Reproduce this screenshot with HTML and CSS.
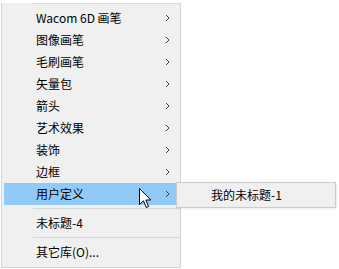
FILE: index.html
```html
<!DOCTYPE html>
<html>
<head>
	<meta charset="utf-8" />
	<title>Menu</title>
	<link rel="stylesheet" href="styles.css">
</head>
<body>
	<div class="menu">
		<div class="sep"></div>
		<div class="item">Wacom 6D 画笔<svg class="arrow" width="5" height="8" viewBox="0 0 5 8"><polyline points="1,1 4,4 1,7" /></svg></div>
		<div class="item">图像画笔<svg class="arrow" width="5" height="8" viewBox="0 0 5 8"><polyline points="1,1 4,4 1,7" /></svg></div>
		<div class="item">毛刷画笔<svg class="arrow" width="5" height="8" viewBox="0 0 5 8"><polyline points="1,1 4,4 1,7" /></svg></div>
		<div class="item">矢量包<svg class="arrow" width="5" height="8" viewBox="0 0 5 8"><polyline points="1,1 4,4 1,7" /></svg></div>
		<div class="item">箭头<svg class="arrow" width="5" height="8" viewBox="0 0 5 8"><polyline points="1,1 4,4 1,7" /></svg></div>
		<div class="item">艺术效果<svg class="arrow" width="5" height="8" viewBox="0 0 5 8"><polyline points="1,1 4,4 1,7" /></svg></div>
		<div class="item">装饰<svg class="arrow" width="5" height="8" viewBox="0 0 5 8"><polyline points="1,1 4,4 1,7" /></svg></div>
		<div class="item">边框<svg class="arrow" width="5" height="8" viewBox="0 0 5 8"><polyline points="1,1 4,4 1,7" /></svg></div>
		<div class="item active">用户定义<svg class="arrow" width="5" height="8" viewBox="0 0 5 8"><polyline points="1,1 4,4 1,7" /></svg></div>
		<div class="sep"></div>
		<div class="item">未标题-4</div>
		<div class="sep"></div>
		<div class="item">其它库(O)...</div>
	</div>

	<!-- open submenu -->
	<div class="submenu">
		<div class="item">我的未标题-1</div>
	</div>

	<!-- mouse pointer -->
	<svg class="cursor" width="14" height="21" viewBox="0 0 14 21">
		<path d="M0.5,0.5 L0.5,16.5 L4.5,12.8 L7.3,19.5 L9.6,18.5 L6.9,12 L11.8,12 Z" />
	</svg>
</body>
</html>
```

FILE: styles.css
```css
body {
	margin: 0;
	background-color: #fff;
	font-family: "Noto Sans CJK SC", "Liberation Sans", sans-serif;
	font-size: 12px;
	color: #000;
}

/* Main popup menu */
.menu {
	width: 178px;
	height: 265px;
	margin-left: 1px;
	background-color: #f0f0f0;
	border-left: 1px solid #d4d4d4;
	border-right: 1px solid #d4d4d4;
	border-bottom: 1px solid #d4d4d4;
	box-sizing: border-box;
	width: 180px;
}

.menu .item {
	display: flex;
	align-items: center;
	justify-content: space-between;
	height: 22px;
	margin: 0 4px 0 2px;
	padding: 0 6px 0 32px;
	line-height: 22px;
}

.menu .item.active {
	background-color: #91c9f7;
}

.sep {
	height: 1px;
	margin: 3px 0 3px 31px;
	background-color: #d7d7d7;
}

.arrow polyline {
	fill: none;
	stroke: #404040;
	stroke-width: 1;
}

/* Submenu */
.submenu {
	position: absolute;
	left: 176px;
	top: 182px;
	width: 160px;
	height: 26px;
	background-color: #f0f0f0;
	border: 1px solid #cccccc;
	box-sizing: border-box;
	box-shadow: 1px 1px 2px rgba(0, 0, 0, 0.08);
}

.submenu .item {
	height: 24px;
	line-height: 24px;
	padding-left: 34px;
}

.cursor {
	position: absolute;
	left: 139px;
	top: 188px;
}

.cursor path {
	fill: #fff;
	stroke: #000;
	stroke-width: 1;
	stroke-linejoin: miter;
}
```
